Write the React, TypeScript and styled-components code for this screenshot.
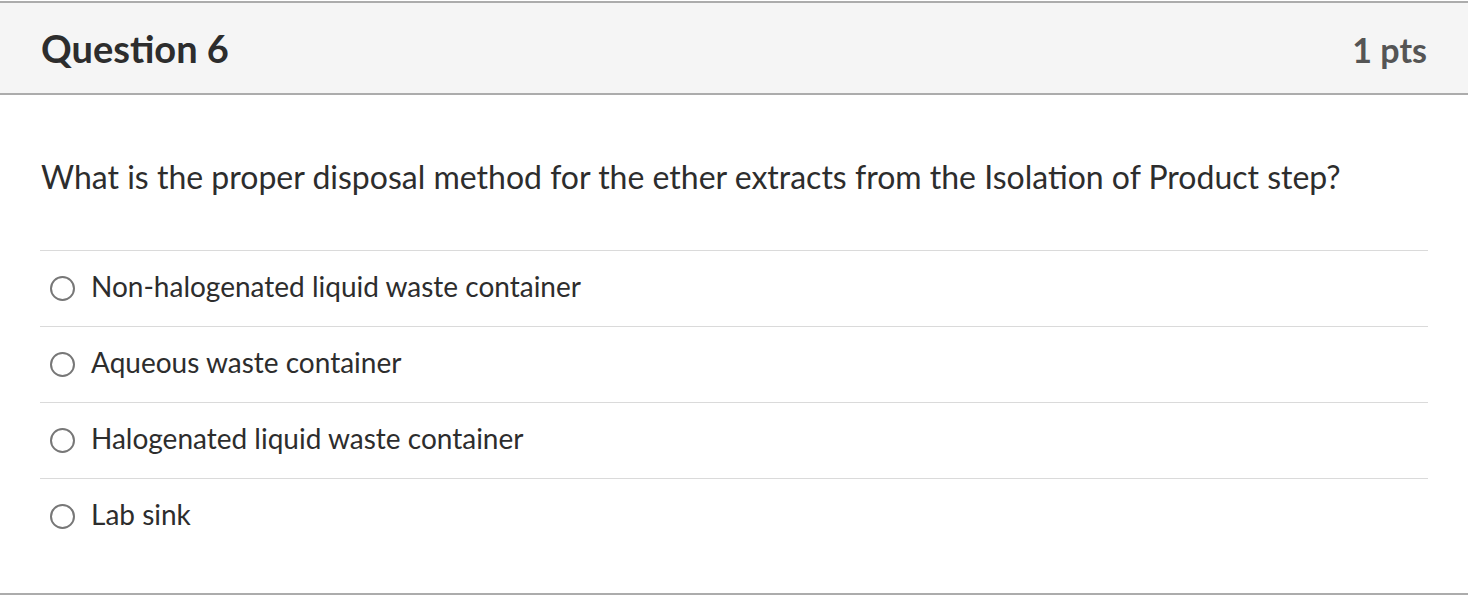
import styled, { createGlobalStyle } from "styled-components";

const GlobalStyle = createGlobalStyle`
    html, body {
        margin: 0;
        padding: 0;
        background: #fff;
    }
    body {
        font-family: Lato, "Open Sans", sans-serif;
        color: #2d3b45;
    }
`;

const Card = styled.div`
    width: 1468px;
    padding-top: 1px;
`;

const Header = styled.div`
    display: flex;
    align-items: center;
    justify-content: space-between;
    height: 90px;
    padding: 0 41px 0 41px;
    background: #f5f5f5;
    border-top: 2px solid #acacac;
    border-bottom: 2px solid #acacac;
    box-sizing: content-box;
`;

const Title = styled.h2`
    margin: 0;
    font-size: 38px;
    font-weight: 700;
    color: #2d2d2d;
`;

const Points = styled.span`
    font-size: 34px;
    font-weight: 700;
    color: #555;
    padding-top: 3px;
`;

const Body = styled.div`
    padding: 0 40px 0 40px;
    border-bottom: 2px solid #acacac;
`;

const Prompt = styled.p`
    margin: 0;
    padding: 63px 0 54px 1px;
    font-size: 32px;
    line-height: 38px;
    color: #2d2d2d;
`;

const Answers = styled.div`
    display: flex;
    flex-direction: column;
    padding-bottom: 39px;
`;

const Answer = styled.label`
    display: flex;
    align-items: center;
    gap: 16px;
    height: 70px;
    padding: 0 0 5px 10px;
    border-top: 1px solid #dadada;
    font-size: 28px;
    color: #2d2d2d;
`;

const Radio = styled.span`
    width: 21px;
    height: 21px;
    margin-top: 4px;
    border: 2px solid #777;
    border-radius: 50%;
    flex: none;
`;

const answers = [
    "Non-halogenated liquid waste container",
    "Aqueous waste container",
    "Halogenated liquid waste container",
    "Lab sink",
];

export default function App() {
    return (
        <Card>
            <GlobalStyle/>
            <Header>
                <Title>Question 6</Title>
                <Points>1 pts</Points>
            </Header>
            <Body>
                <Prompt>What is the proper disposal method for the ether extracts from the Isolation of Product step?</Prompt>
                <Answers>
                    {answers.map(a => (
                        <Answer key={a}>
                            <Radio/>
                            {a}
                        </Answer>
                    ))}
                </Answers>
            </Body>
        </Card>
    );
}
